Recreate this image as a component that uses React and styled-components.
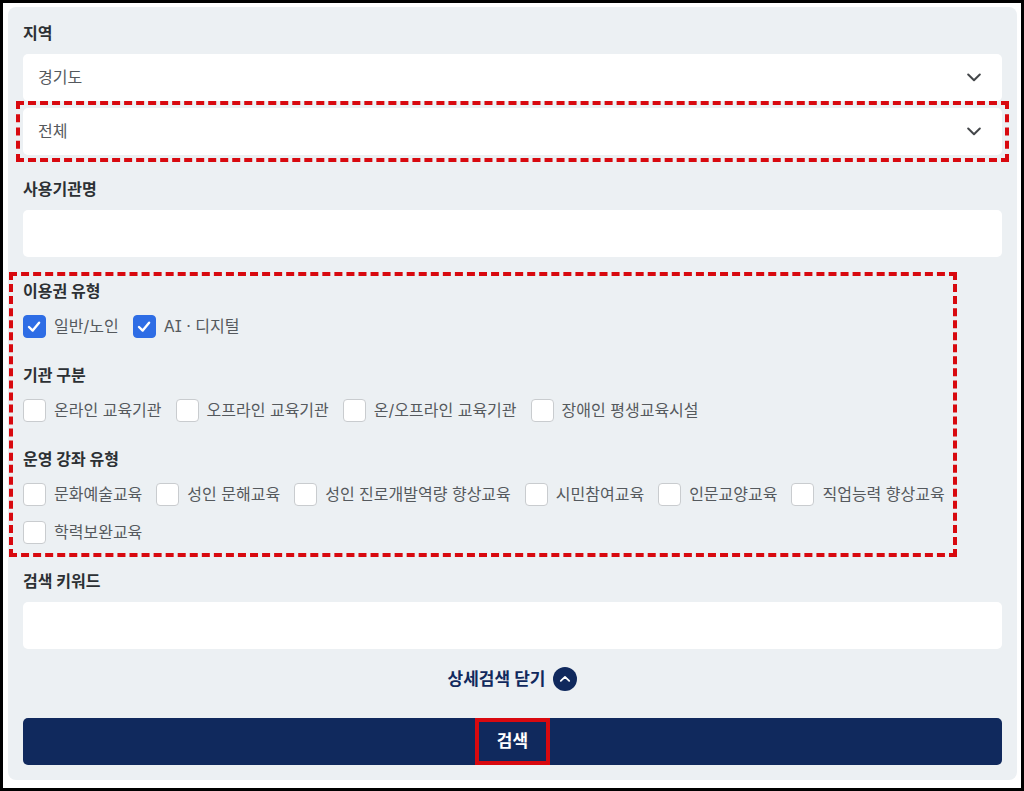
import {useState} from "react";
import styled, {createGlobalStyle} from "styled-components";

const GlobalStyle = createGlobalStyle`
  * {
    box-sizing: border-box;
  }
  body {
    margin: 0;
    background: white;
    color: #55595d;
    font-family: Inter, "Noto Sans CJK KR", sans-serif;
    font-feature-settings: "ss02";
    font-size: 16px;
    line-height: 25px;
  }
  input, select, button {
    font: inherit;
    color: inherit;
    margin: 0;
  }
`
const Frame = styled.main`
  min-height: 100vh;
  padding: 4px 4px 5px 5px;
  border: 3px solid black;
`
const Panel = styled.form`
  display: flex;
  flex-direction: column;
  gap: 22px;
  padding: 14px 15px 15px;
  border-radius: 8px;
  background: #ecf0f3;
`
const Group = styled.fieldset`
  display: flex;
  flex-direction: column;
  gap: 8px;
  min-width: 0;
  margin: 0;
  padding: 0;
  border: none;
`
const Title = styled.label`
  display: block;
  color: #2c3034;
  font-weight: 700;
`
const Selects = styled.div`
  display: grid;
  gap: 7px;
`
const SelectBox = styled.div`
  position: relative;
  svg {
    position: absolute;
    top: 19px;
    right: 21px;
    pointer-events: none;
  }
`
const Select = styled.select`
  display: block;
  width: 100%;
  height: 47px;
  padding: 0 48px 0 15px;
  appearance: none;
  border: none;
  border-radius: 5px;
  background: white;
`
const TextBox = styled.input`
  display: block;
  width: 100%;
  height: 47px;
  padding: 0 15px;
  border: none;
  border-radius: 5px;
  background: white;
`
// red outline laid over the part it points at
const Marker = styled.span`
  position: absolute;
  inset: ${props => props.$inset};
  border: 4px ${props => props.$line || "dashed"} #d8090f;
  pointer-events: none;
`
const Filters = styled.div`
  position: relative;
  display: flex;
  flex-direction: column;
  gap: 22px;
`
const Choices = styled.div`
  display: flex;
  flex-wrap: wrap;
  gap: 9px 14px;
`
const Choice = styled.label`
  display: flex;
  align-items: center;
  gap: 8px;
  height: 29px;
`
const Tick = styled.span`
  display: grid;
  place-items: center;
  input, svg {
    grid-area: 1 / 1;
  }
  svg {
    pointer-events: none;
  }
`
const CheckBox = styled.input`
  width: 23px;
  height: 23px;
  appearance: none;
  border: 1px solid #c9cccf;
  border-radius: 4px;
  background: white;
  &:checked {
    border-color: #2e6de5;
    background: #2e6de5;
  }
`
const Toggle = styled.button`
  display: flex;
  align-items: center;
  align-self: center;
  gap: 8px;
  height: 24px;
  margin: -4px 0 5px;
  padding: 0;
  border: none;
  background: none;
  color: #10295d;
  font-size: 17px;
  font-weight: 700;
`
const Submit = styled.button`
  position: relative;
  display: grid;
  place-items: center;
  height: 47px;
  padding: 0;
  border: none;
  border-radius: 5px;
  background: #10295d;
  color: white;
  font-size: 17px;
  font-weight: 700;
`
const Word = styled.span`
  position: relative;
  padding: 11px 22px;
`

const filters = [
    {title: "이용권 유형", items: ["일반/노인", "AI · 디지털"]},
    {title: "기관 구분", items: ["온라인 교육기관", "오프라인 교육기관", "온/오프라인 교육기관", "장애인 평생교육시설"]},
    {title: "운영 강좌 유형", items: ["문화예술교육", "성인 문해교육", "성인 진로개발역량 향상교육", "시민참여교육", "인문교양교육", "직업능력 향상교육", "학력보완교육"]},
]

function Chevron(){
    return(
        <svg width="14" height="9" viewBox="0 0 14 9" fill="none" stroke="#44474a" strokeWidth="2" strokeLinecap="round" strokeLinejoin="round">
            <path d="M1.2 1.5 7 7.2l5.8-5.7"/>
        </svg>
    )
}

function CheckItem({name, checked, onChange}){
    return(
        <Choice>
            <Tick>
                <CheckBox type="checkbox" checked={checked} onChange={onChange}/>
                {checked && (
                    <svg width="23" height="23" viewBox="0 0 23 23" fill="none" stroke="white" strokeWidth="2.4" strokeLinecap="round" strokeLinejoin="round">
                        <path d="m6 12 3.7 3.6 6.4-7.8"/>
                    </svg>
                )}
            </Tick>
            {name}
        </Choice>
    )
}

export default function App(){
    const [checked, setChecked] = useState(["일반/노인", "AI · 디지털"])
    const toggle = name => setChecked(checked.includes(name) ? checked.filter(n => n !== name) : [...checked, name])
    return(
        <Frame>
            <GlobalStyle/>
            <Panel onSubmit={e => e.preventDefault()}>
                <Group>
                    <Title htmlFor="region">지역</Title>
                    <Selects>
                        <SelectBox>
                            <Select id="region"><option>경기도</option></Select>
                            <Chevron/>
                        </SelectBox>
                        <SelectBox>
                            <Select aria-label="지역"><option>전체</option></Select>
                            <Chevron/>
                            <Marker $inset="-7px"/>
                        </SelectBox>
                    </Selects>
                </Group>
                <Group>
                    <Title htmlFor="agency">사용기관명</Title>
                    <TextBox id="agency" type="text"/>
                </Group>
                <Filters>
                    {filters.map(filter => (
                        <Group key={filter.title} aria-label={filter.title}>
                            <Title as="span">{filter.title}</Title>
                            <Choices>
                                {filter.items.map(name => (
                                    <CheckItem key={name} name={name} checked={checked.includes(name)} onChange={() => toggle(name)}/>
                                ))}
                            </Choices>
                        </Group>
                    ))}
                    <Marker $inset="-7px 45px -10px -14px"/>
                </Filters>
                <Group>
                    <Title htmlFor="keyword">검색 키워드</Title>
                    <TextBox id="keyword" type="text"/>
                </Group>
                <Toggle type="button">
                    상세검색 닫기
                    <svg width="24" height="24" viewBox="0 0 24 24" fill="none">
                        <circle cx="12" cy="12" r="12" fill="#10295d"/>
                        <path d="m7.8 13.8 4.2-3.9 4.2 3.9" stroke="white" strokeWidth="1.8" strokeLinecap="round" strokeLinejoin="round"/>
                    </svg>
                </Toggle>
                <Submit type="submit">
                    <Word>
                        검색
                        <Marker $inset="0" $line="solid"/>
                    </Word>
                </Submit>
            </Panel>
        </Frame>
    )
}
